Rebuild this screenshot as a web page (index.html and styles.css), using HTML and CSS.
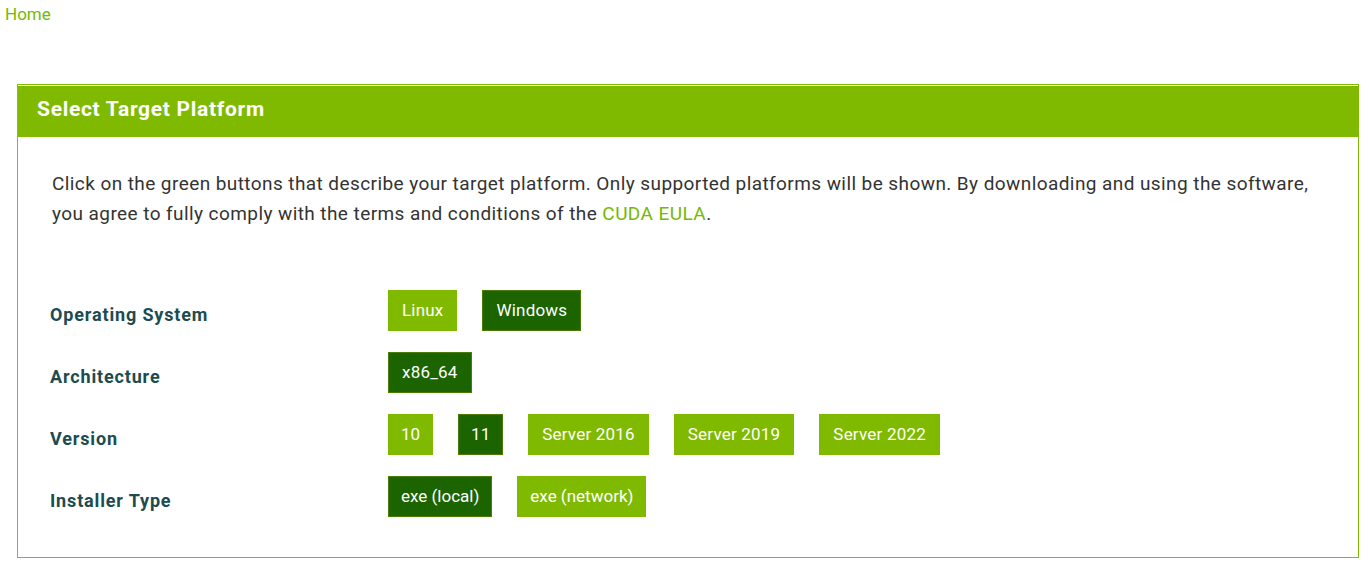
FILE: index.html
```html
<!DOCTYPE html>
<html lang="en">
<head>
<meta charset="utf-8">
<title>Select Target Platform</title>
<link rel="stylesheet" href="styles.css">
</head>
<body>
<nav class="crumbs"><a class="home" href="#">Home</a></nav>
<section class="panel">
  <h2 class="panel-head">Select Target Platform</h2>
  <div class="panel-body">
    <p class="intro">Click on the green buttons that describe your target platform. Only supported platforms will be shown. By downloading and using the software, you agree to fully comply with the terms and conditions of the <a class="eula" href="#">CUDA EULA</a>.</p>
    <div class="rows">
      <div class="label">Operating System</div>
      <div class="opts"><span class="btn">Linux</span><span class="btn on">Windows</span></div>
      <div class="label">Architecture</div>
      <div class="opts"><span class="btn on">x86_64</span></div>
      <div class="label">Version</div>
      <div class="opts"><span class="btn num">10</span><span class="btn num on">11</span><span class="btn">Server 2016</span><span class="btn">Server 2019</span><span class="btn">Server 2022</span></div>
      <div class="label">Installer Type</div>
      <div class="opts"><span class="btn tight on">exe (local)</span><span class="btn tight">exe (network)</span></div>
    </div>
  </div>
</section>
</body>
</html>
```
FILE: styles.css
```css
html, body {
  margin: 0;
  padding: 0;
  background: #fff;
  font-family: Roboto, "Liberation Sans", sans-serif;
}
.crumbs {
  padding: 3px 5px 0;
  height: 84px;
  box-sizing: border-box;
  font-size: 17px;
  line-height: 22px;
}
.home {
  color: #76b900;
  text-decoration: none;
}
.panel {
  margin: 0 10px 0 17px;
  border: 1px solid #7fba00;
  border-bottom-color: #84b13a;
  border-left-color: #8ab43c;
}
.panel-head {
  margin: 1px 0 0;
  background: #7fba00;
  color: #fff;
  font-size: 21px;
  font-weight: 700;
  letter-spacing: 0.7px;
  line-height: 47px;
  height: 47px;
  padding: 0 19px 4px;
}
.panel-body {
  padding: 32px 32px 40px;
}
.intro {
  margin: 0 0 61px 2px;
  font-size: 19px;
  letter-spacing: 0.42px;
  line-height: 30px;
  color: #333;
}
.eula {
  color: #76b900;
  text-decoration: none;
}
.rows {
  display: grid;
  grid-template-columns: 338px 1fr;
  row-gap: 21px;
  align-items: center;
}
.label {
  font-size: 18px;
  font-weight: 700;
  letter-spacing: 0.85px;
  color: #1d4b4f;
  padding-top: 7px;
}
.opts {
  display: flex;
  gap: 25px;
}
.btn {
  display: inline-block;
  background: #7fba00;
  color: #fff;
  border: 1px solid #7fba00;
  font-size: 17px;
  letter-spacing: 0.2px;
  line-height: 39px;
  height: 39px;
  padding: 0 13px;
}
.btn.num {
  padding: 0 12px;
  letter-spacing: 0;
}
.btn.tight {
  letter-spacing: 0;
  padding: 0 12px;
}
.btn.on {
  background: #1b6400;
  border-color: #4d7d00;
}
```
